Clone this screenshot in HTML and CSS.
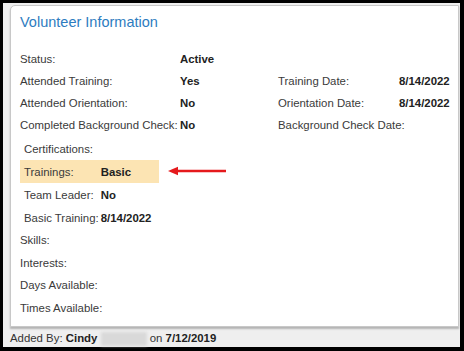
FILE: index.html
```html
<!DOCTYPE html>
<html lang="en">

<head>
    <meta charset="UTF-8">
    <meta name="viewport" content="width=device-width, initial-scale=1.0">
    <title>Volunteer Information</title>
    <link rel="stylesheet" href="styles.css">
</head>

<body>

    <div class="frame">
        <div class="panel">
            <h2 class="panel-title">Volunteer Information</h2>

            <table class="info">
                <colgroup>
                    <col class="c-label">
                    <col class="c-value">
                    <col class="c-label2">
                    <col>
                </colgroup>
                <tr>
                    <td>Status:</td>
                    <td class="val">Active</td>
                    <td></td>
                    <td></td>
                </tr>
                <tr>
                    <td>Attended Training:</td>
                    <td class="val">Yes</td>
                    <td>Training Date:</td>
                    <td class="val">8/14/2022</td>
                </tr>
                <tr>
                    <td>Attended Orientation:</td>
                    <td class="val">No</td>
                    <td>Orientation Date:</td>
                    <td class="val">8/14/2022</td>
                </tr>
                <tr>
                    <td>Completed Background Check:</td>
                    <td class="val">No</td>
                    <td>Background Check Date:</td>
                    <td class="val"></td>
                </tr>
            </table>

            <div class="certs">
                <table class="cert-table">
                    <tr>
                        <td colspan="2">Certifications:</td>
                    </tr>
                    <tr class="highlight">
                        <td>Trainings:</td>
                        <td class="val">Basic</td>
                    </tr>
                    <tr>
                        <td>Team Leader:</td>
                        <td class="val">No</td>
                    </tr>
                    <tr>
                        <td>Basic Training:</td>
                        <td class="val">8/14/2022</td>
                    </tr>
                </table>

                <!-- annotation arrow -->
                <svg class="arrow" width="58" height="10" viewBox="0 0 58 10">
                    <line x1="6" y1="5" x2="58" y2="5" stroke="#e5191c" stroke-width="2.6" />
                    <polygon points="0,5 10,0.8 10,9.2" fill="#e5191c" />
                </svg>
            </div>

            <table class="extra">
                <tr><td>Skills:</td></tr>
                <tr><td>Interests:</td></tr>
                <tr><td>Days Available:</td></tr>
                <tr><td>Times Available:</td></tr>
            </table>
        </div>

        <div class="footer">
            Added By: <b>Cindy</b> <span class="blur"></span> on <b>7/12/2019</b>
        </div>
    </div>

</body>

</html>
```

FILE: styles.css
```css
body {
    margin: 0;
    font-family: 'Liberation Sans', Arial, sans-serif;
    font-size: 11.4px;
    color: #3a3a3a;
}

.frame {
    width: 464px;
    height: 351px;
    box-sizing: border-box;
    border: 3px solid #000;
    border-right-width: 4px;
    border-bottom-width: 4px;
    background: #efefef;
    padding: 2px 1px 0 7px;
}

.panel {
    height: 322px;
    box-sizing: border-box;
    background: #fff;
    border: 1px solid #c8c8c8;
    border-radius: 5px 0 0 0;
    padding: 7px 9px 0 9px;
    box-shadow: 0 2px 2px rgba(0, 0, 0, 0.25);
}

.panel-title {
    margin: 0;
    font-size: 14.5px;
    font-weight: normal;
    line-height: 19px;
    color: #2d7cc0;
}

table {
    border-collapse: collapse;
}

td {
    padding: 0;
    white-space: nowrap;
}

.val {
    font-weight: bold;
    color: #222;
}

.info {
    margin-top: 16px;
    width: 100%;
    table-layout: fixed;
}

.info td {
    height: 22px;
}

.c-label {
    width: 160px;
}

.c-value {
    width: 98px;
}

.c-label2 {
    width: 121px;
}

.certs {
    position: relative;
    margin-top: 1px;
}

.cert-table td {
    height: 23px;
    padding: 0 0 0 4px;
}

.cert-table .val {
    padding: 0 8px 0 2px;
}

.highlight {
    background: #fce4b3;
}

.arrow {
    position: absolute;
    left: 148px;
    top: 29px;
}

.extra td {
    height: 22.5px;
}

.footer {
    padding: 4px 0 0 0;
    line-height: 14px;
    color: #333;
}

.footer b {
    color: #222;
}

.blur {
    display: inline-block;
    width: 46px;
    height: 14px;
    vertical-align: middle;
    background: #d9d9d9;
    filter: blur(1.5px);
}
```
